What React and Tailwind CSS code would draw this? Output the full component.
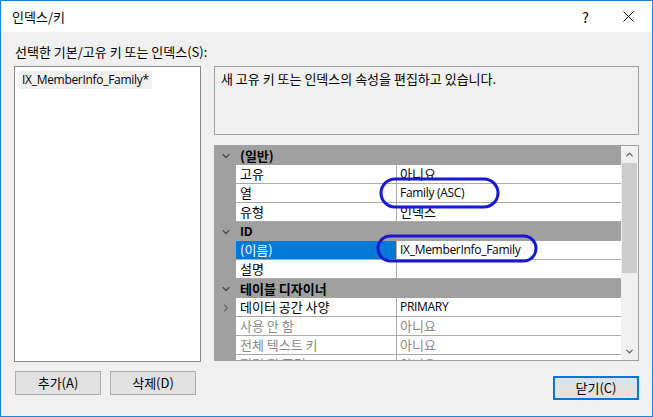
import { ChevronDown, ChevronRight, ChevronUp } from "lucide-react";

const FONT = "font-['Noto_Sans_CJK_KR','Noto_Sans',sans-serif]";
// Latin-only strings look closer to Segoe UI in Open Sans, slightly tightened
const LATIN = "font-['Open_Sans','Noto_Sans_CJK_KR',sans-serif] text-[12px] tracking-[-0.3px]";

const hasHangul = (s) => /[가-힣]/.test(s);
const T = ({ children }) =>
  children && !hasHangul(children) ? <span className={LATIN}>{children}</span> : <span>{children}</span>;

const SECTIONS = [
  {
    title: "(일반)",
    rows: [
      { name: "고유", value: "아니요" },
      { name: "열", value: "Family (ASC)" },
      { name: "유형", value: "인덱스" },
    ],
  },
  {
    title: "ID",
    rows: [
      { name: "(이름)", value: "IX_MemberInfo_Family", selected: true },
      { name: "설명", value: "" },
    ],
  },
  {
    title: "테이블 디자이너",
    rows: [
      { name: "데이터 공간 사양", value: "PRIMARY", expand: true },
      { name: "사용 안 함", value: "아니요", dim: true },
      { name: "전체 텍스트 키", value: "아니요", dim: true },
      { name: "필터 된 조건", value: "아니요", dim: true },
    ],
  },
];

function HeaderRow({ title }) {
  return (
    <div className="h-[19px] shrink-0 flex items-center bg-[#a0a0a0]">
      <div className="w-[21px] flex justify-center">
        <ChevronDown size={12} strokeWidth={2.5} className="text-[#4a4a4a]" />
      </div>
      <span className="pl-1 font-bold text-black">
        <T>{title}</T>
      </span>
    </div>
  );
}

function PropRow({ row }) {
  return (
    <div className="h-[19px] shrink-0 flex bg-[#a0a0a0]">
      <div className="w-[21px] flex items-center justify-center">
        {row.expand && <ChevronRight size={12} strokeWidth={2.5} className="text-[#6a6a6a]" />}
      </div>
      <div
        className={
          "w-[160px] flex items-center pl-1 border-b border-[#a9a9a9] " +
          (row.selected ? "bg-[#0078d7] text-white" : "bg-white") +
          (row.dim ? " text-[#8a8a8a]" : row.selected ? "" : " text-black")
        }
      >
        {row.name}
      </div>
      <div
        className={
          "flex-1 flex items-center pl-[3px] bg-white border-l border-b border-[#a9a9a9] " +
          (row.dim ? "text-[#8a8a8a]" : "text-black")
        }
      >
        <T>{row.value}</T>
      </div>
    </div>
  );
}

export default function App() {
  return (
    <div className={"relative w-[653px] h-[417px] flex flex-col border border-[#1883d7] bg-[#f0f0f0] text-[13px] leading-[16px] " + FONT}>
      {/* Title bar */}
      <div className="h-[31px] shrink-0 bg-white flex items-center pl-[11px] pr-[18px]">
        <span className="flex-1 text-black text-[13px]">인덱스/키</span>
        <span className="text-[14px] text-black mr-[34px]">?</span>
        <svg width="11" height="11" viewBox="0 0 11 11">
          <path d="M0.5 0.5 L10.5 10.5 M10.5 0.5 L0.5 10.5" stroke="#111" strokeWidth="1" />
        </svg>
      </div>

      {/* Body */}
      <div className="flex-1 flex flex-col px-[13px] pt-[12px]">
        <div className="text-black ml-[1px]">선택한 기본/고유 키 또는 인덱스(S):</div>

        <div className="flex mt-[6px] gap-[13px]">
          {/* Index list */}
          <div className="w-[187px] h-[296px] border border-[#828790] bg-white pl-[4px] pt-[4px]">
            <div className="inline-block bg-[#f0f0f0] px-[3px] pb-[1px] text-black">
              <T>IX_MemberInfo_Family*</T>
            </div>
          </div>

          {/* Right column */}
          <div className="w-[425px] flex flex-col">
            <div className="h-[69px] border border-[#a0a0a0] bg-[#f0f0f0] px-[6px] pt-[4px] text-black">
              새 고유 키 또는 인덱스의 속성을 편집하고 있습니다.
            </div>

            <div className="mt-[10px] h-[216px] flex border border-[#a0a0a0] bg-[#a0a0a0] overflow-hidden">
              <div className="flex-1 flex flex-col overflow-hidden">
                {SECTIONS.map((s) => (
                  <div key={s.title} className="flex flex-col">
                    <HeaderRow title={s.title} />
                    {s.rows.map((r) => (
                      <PropRow key={r.name} row={r} />
                    ))}
                  </div>
                ))}
              </div>
              {/* Scrollbar */}
              <div className="w-[17px] shrink-0 bg-[#f0f0f0] flex flex-col items-center">
                <div className="h-[17px] flex items-center">
                  <ChevronUp size={11} strokeWidth={3} className="text-[#606060]" />
                </div>
                <div className="w-[15px] h-[110px] bg-[#cdcdcd]" />
                <div className="flex-1" />
                <div className="h-[17px] flex items-center">
                  <ChevronDown size={11} strokeWidth={3} className="text-[#606060]" />
                </div>
              </div>
            </div>
          </div>
        </div>

        {/* Buttons */}
        <div className="flex mt-[9px]">
          <button className="w-[86px] h-[24px] ml-[1px] border border-[#adadad] bg-[#e1e1e1] text-black">추가(A)</button>
          <button className="w-[86px] h-[24px] ml-[9px] border border-[#adadad] bg-[#e1e1e1] text-black">삭제(D)</button>
          <div className="flex-1" />
          <button className="w-[86px] h-[24px] mt-[5px] border-2 border-[#0078d7] bg-[#e1e1e1] text-black">닫기(C)</button>
        </div>
      </div>

      {/* Hand-drawn annotations */}
      <svg className="absolute left-[-1px] top-[-1px] pointer-events-none" width="653" height="417">
        <rect x="381" y="179" width="117" height="28" rx="14" fill="none" stroke="#1818d0" strokeWidth="3" />
        <rect x="378" y="236" width="158" height="25" rx="12.5" fill="none" stroke="#1818d0" strokeWidth="3" />
      </svg>
    </div>
  );
}
